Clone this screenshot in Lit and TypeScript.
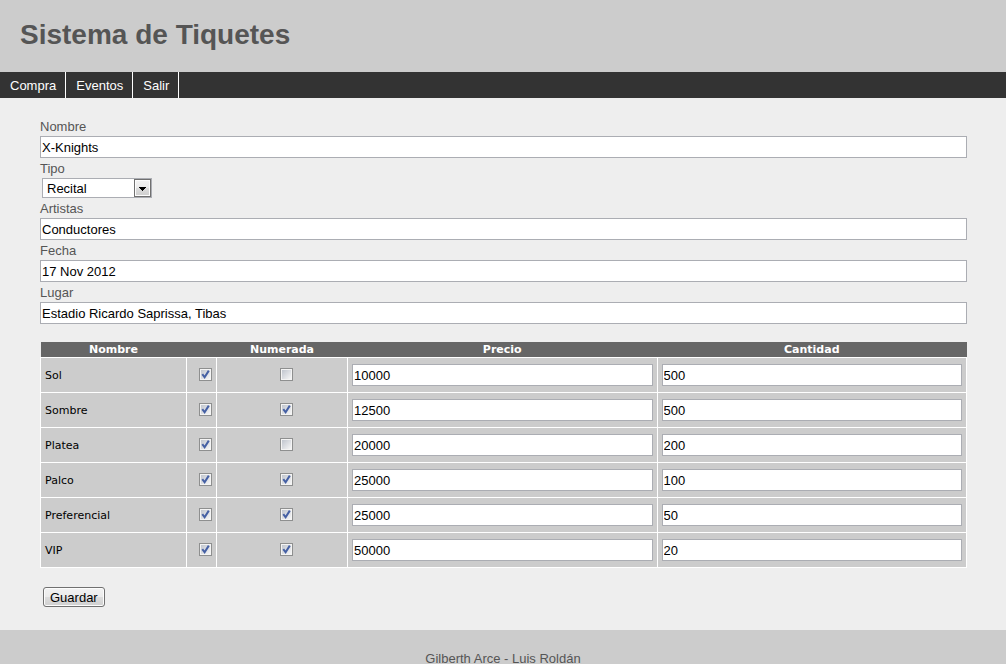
import { LitElement, html, css, svg } from "lit";
import { customElement, state } from "lit/decorators.js";

interface Zone {
  name: string;
  active: boolean;
  numbered: boolean;
  price: string;
  amount: string;
}

@customElement("app-root")
export class AppRoot extends LitElement {
  @state() private zones: Zone[] = [
    { name: "Sol", active: true, numbered: false, price: "10000", amount: "500" },
    { name: "Sombre", active: true, numbered: true, price: "12500", amount: "500" },
    { name: "Platea", active: true, numbered: false, price: "20000", amount: "200" },
    { name: "Palco", active: true, numbered: true, price: "25000", amount: "100" },
    { name: "Preferencial", active: true, numbered: true, price: "25000", amount: "50" },
    { name: "VIP", active: true, numbered: true, price: "50000", amount: "20" },
  ];

  static styles = css`
    :host {
      display: flex;
      flex-direction: column;
      min-height: 100vh;
      background: #eee;
      color: #555;
      font: 13px/20px "Liberation Sans", Arial, sans-serif;
    }
    .header {
      background: #ccc;
      padding: 18px 20px 20px;
    }
    .title {
      margin: 0;
      font-size: 28px;
      line-height: 34px;
    }
    .nav {
      display: flex;
      background: #333;
    }
    .nav-link {
      padding: 2px 9px 0 10px;
      border-right: 1px solid #fff;
      color: #fff;
      line-height: 24px;
      text-decoration: none;
    }
    .main {
      flex: 1;
      padding: 18px 39px 23px 40px;
    }
    .label {
      display: block;
      padding-top: 2px;
      line-height: 18px;
    }
    .input,
    .select {
      box-sizing: border-box;
      display: block;
      margin: 0;
      border: 1px solid #abadb3;
      border-radius: 0;
      background: #fff;
      color: #000;
      font: inherit;
    }
    .input {
      width: 100%;
      height: 22px;
      padding: 0 1px;
    }
    .picker {
      display: grid;
      width: 110px;
      margin: 0 2px;
    }
    .select {
      grid-area: 1 / 1;
      height: 20px;
      padding: 2px 20px 0 4px;
      line-height: 16px;
      appearance: none;
    }
    .arrow {
      grid-area: 1 / 1;
      justify-self: end;
      pointer-events: none;
    }
    .table {
      width: 100%;
      margin: 18px 0 19px;
      table-layout: fixed;
      border-collapse: collapse;
      color: #000;
      font: 11px/15px "DejaVu Sans", Verdana, sans-serif;
    }
    .col-name {
      width: 146px;
    }
    .col-active {
      width: 30px;
    }
    .col-numbered {
      width: 131px;
    }
    .head {
      padding: 0;
      background: #666;
      color: #fff;
    }
    .cell {
      padding: 6px 4px;
      border: 1px solid #fff;
      background: #ccc;
    }
    .cell .input {
      font: 13px/20px "Liberation Sans", Arial, sans-serif;
    }
    .tick {
      padding-bottom: 8px;
      text-align: center;
    }
    .box {
      display: inline-grid;
      margin-left: 8px;
      vertical-align: middle;
    }
    .check {
      grid-area: 1 / 1;
      box-sizing: border-box;
      width: 13px;
      height: 13px;
      margin: 0;
      padding: 1px;
      appearance: none;
      border: 1px solid #8e8f8f;
      background: linear-gradient(135deg, #c0c5ce, #f6f6f6) content-box, #f4f4f4;
    }
    .mark {
      grid-area: 1 / 1;
      pointer-events: none;
      visibility: hidden;
    }
    .check:checked + .mark {
      visibility: visible;
    }
    .save {
      display: block;
      box-sizing: border-box;
      height: 20px;
      margin: 0 3px;
      padding: 2px 6px 0;
      border: 1px solid #707070;
      border-radius: 3px;
      box-shadow: inset 0 0 0 1px #fcfcfc;
      background: linear-gradient(#f2f2f2 0%, #ebebeb 50%, #ddd 50%, #cfcfcf 100%);
      color: #000;
      font: inherit;
      line-height: 16px;
    }
    .footer {
      padding-top: 24px;
      background: #ccc;
      line-height: 10px;
      text-align: center;
    }
  `;

  private field(id: string, label: string, value: string) {
    return html`
      <label class="label" for=${id}>${label}</label>
      <input class="input" id=${id} type="text" .value=${value} />
    `;
  }

  private tick(label: string, checked: boolean) {
    return html`<span class="box">
      <input class="check" type="checkbox" aria-label=${label} .checked=${checked} />
      <svg class="mark" width="13" height="13" viewBox="0 0 13 13" aria-hidden="true">
        ${svg`<path d="M3.3 6.2 L5.6 9.3 L9.8 2.6" fill="none" stroke="#4560a4" stroke-width="2" />`}
      </svg>
    </span>`;
  }

  render() {
    return html`
      <header class="header"><h1 class="title">Sistema de Tiquetes</h1></header>
      <nav class="nav">
        <a class="nav-link" href="#compra">Compra</a>
        <a class="nav-link" href="#eventos">Eventos</a>
        <a class="nav-link" href="#salir">Salir</a>
      </nav>
      <main class="main">
        ${this.field("nombre", "Nombre", "X-Knights")}
        <label class="label" for="tipo">Tipo</label>
        <div class="picker">
          <select class="select" id="tipo">
            <option>Recital</option>
          </select>
          <svg class="arrow" width="18" height="20" viewBox="0 0 18 20" aria-hidden="true">
            <defs>
              <linearGradient id="face" x2="0" y2="1">
                <stop offset="0" stop-color="#f2f2f2" />
                <stop offset="0.5" stop-color="#ebebeb" />
                <stop offset="0.5" stop-color="#ddd" />
                <stop offset="1" stop-color="#cfcfcf" />
              </linearGradient>
            </defs>
            <rect x="0.5" y="1.5" width="16" height="17" fill="#fcfcfc" stroke="#707070" />
            <rect x="2" y="3" width="13" height="14" fill="url(#face)" />
            <path d="M5 9h7v1h-1v1h-1v1h-1v1h-1v-1h-1v-1h-1v-1h-1z" fill="#000" />
          </svg>
        </div>
        ${this.field("artistas", "Artistas", "Conductores")}
        ${this.field("fecha", "Fecha", "17 Nov 2012")}
        ${this.field("lugar", "Lugar", "Estadio Ricardo Saprissa, Tibas")}
        <table class="table">
          <colgroup>
            <col class="col-name" />
            <col class="col-active" />
            <col class="col-numbered" />
            <col />
            <col />
          </colgroup>
          <thead>
            <tr>
              <th class="head">Nombre</th>
              <th class="head"></th>
              <th class="head">Numerada</th>
              <th class="head">Precio</th>
              <th class="head">Cantidad</th>
            </tr>
          </thead>
          <tbody>
            ${this.zones.map(
              (z) => html`<tr>
                <td class="cell">${z.name}</td>
                <td class="cell tick">${this.tick(`${z.name} activa`, z.active)}</td>
                <td class="cell tick">${this.tick(`${z.name} numerada`, z.numbered)}</td>
                <td class="cell">
                  <input class="input" type="text" aria-label="Precio ${z.name}" .value=${z.price} />
                </td>
                <td class="cell">
                  <input class="input" type="text" aria-label="Cantidad ${z.name}" .value=${z.amount} />
                </td>
              </tr>`
            )}
          </tbody>
        </table>
        <button class="save" type="button">Guardar</button>
      </main>
      <footer class="footer">Gilberth Arce - Luis Roldán</footer>
    `;
  }
}
